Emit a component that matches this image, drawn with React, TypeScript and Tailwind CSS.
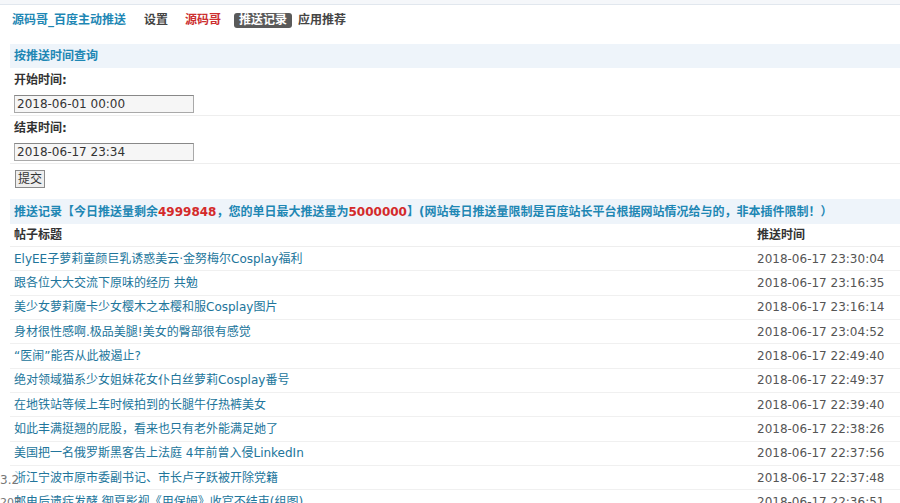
const rows: [string, string][] = [
  ['ElyEE子萝莉童颜巨乳诱惑美云·金努梅尔Cosplay福利', '2018-06-17 23:30:04'],
  ['跟各位大大交流下原味的经历 共勉', '2018-06-17 23:16:35'],
  ['美少女萝莉魔卡少女樱木之本樱和服Cosplay图片', '2018-06-17 23:16:14'],
  ['身材很性感啊.极品美腿!美女的臀部很有感觉', '2018-06-17 23:04:52'],
  ['“医闹”能否从此被遏止?', '2018-06-17 22:49:40'],
  ['绝对领域猫系少女姐妹花女仆白丝萝莉Cosplay番号', '2018-06-17 22:49:37'],
  ['在地铁站等候上车时候拍到的长腿牛仔热裤美女', '2018-06-17 22:39:40'],
  ['如此丰满挺翘的屁股，看来也只有老外能满足她了', '2018-06-17 22:38:26'],
  ['美国把一名俄罗斯黑客告上法庭 4年前曾入侵LinkedIn', '2018-06-17 22:37:56'],
  ['浙江宁波市原市委副书记、市长卢子跃被开除党籍', '2018-06-17 22:37:48'],
  ['邮电后遗症发酵 御夏影视《用保姆》收官不结束(组图)', '2018-06-17 22:36:51'],
]

function Field({ label, value }: { label: string; value: string }) {
  return (
    <>
      <div className="h-[24px] flex items-center pl-[4px] font-bold text-[#333]">{label}</div>
      <div className="h-[24px] border-b border-[#eeeeee] pt-[3px] pl-[4px]">
        <div className="w-[180px] h-[18px] border border-[#a9a9a9] border-t-[#888] bg-[#f6f6f6] px-[2px] leading-[16px] text-[#333]">
          {value}
        </div>
      </div>
    </>
  )
}

export default function App() {
  return (
    <div className="relative w-[900px] h-[503px] overflow-hidden bg-white text-[12px] font-['DejaVu_Sans','Noto_Sans_CJK_SC',sans-serif]">
      <div className="h-[5px] bg-[#f5f7fa] border-b border-[#e1e7ee]" />

      <nav className="mt-[4px] h-[22px] flex items-center pl-[12px] font-bold">
        <span className="text-[#1e87b4]">源码哥_百度主动推送</span>
        <span className="ml-[18px] text-[#444]">设置</span>
        <span className="ml-[17px] text-[#cc2f2f]">源码哥</span>
        <span className="ml-[13px] px-[5px] h-[15px] leading-[15px] rounded-[3px] bg-[#5a5a5a] text-white">推送记录</span>
        <span className="ml-[6px] text-[#444]">应用推荐</span>
      </nav>

      <div className="ml-[10px] mt-[13px]">
        <div className="h-[24px] flex items-center pl-[4px] bg-[#eef4fa] font-bold text-[#1e87b4]">按推送时间查询</div>

        <Field label="开始时间:" value="2018-06-01 00:00" />
        <Field label="结束时间:" value="2018-06-17 23:34" />

        <div className="h-[35px] pt-[6px] pl-[5px]">
          <button className="w-[30px] h-[18px] border border-[#8a8a8a] bg-[#eeeeee] text-[#333] text-[12px] leading-[16px] p-0">
            提交
          </button>
        </div>

        <div className="h-[25px] flex items-center pl-[4px] bg-[#eef4fa] font-bold text-[#1e87b4] whitespace-nowrap">
          推送记录【今日推送量剩余<span className="text-[#d42a2a]">4999848</span>，您的单日最大推送量为
          <span className="text-[#d42a2a]">5000000</span>】(网站每日推送量限制是百度站长平台根据网站情况给与的，非本插件限制！）
        </div>

        <div className="grid grid-cols-[743px_1fr] h-[23px] items-center pl-[4px] border-b border-[#eeeeee] font-bold text-[#333]">
          <span>帖子标题</span>
          <span>推送时间</span>
        </div>

        {rows.map(([title, time]) => (
          <div
            key={time}
            className="grid grid-cols-[743px_1fr] h-[24.33px] items-center pl-[4px] border-b border-[#f0f0f0] whitespace-nowrap"
          >
            <span className="text-[#21759b]">{title}</span>
            <span className="text-[#555]">{time}</span>
          </div>
        ))}
      </div>

      <span className="absolute left-0 top-[471px] text-[12px] text-[#777] bg-white/60">3.2</span>
      <span className="absolute left-0 top-[495px] text-[11px] text-[#777]">20Z</span>
    </div>
  )
}
